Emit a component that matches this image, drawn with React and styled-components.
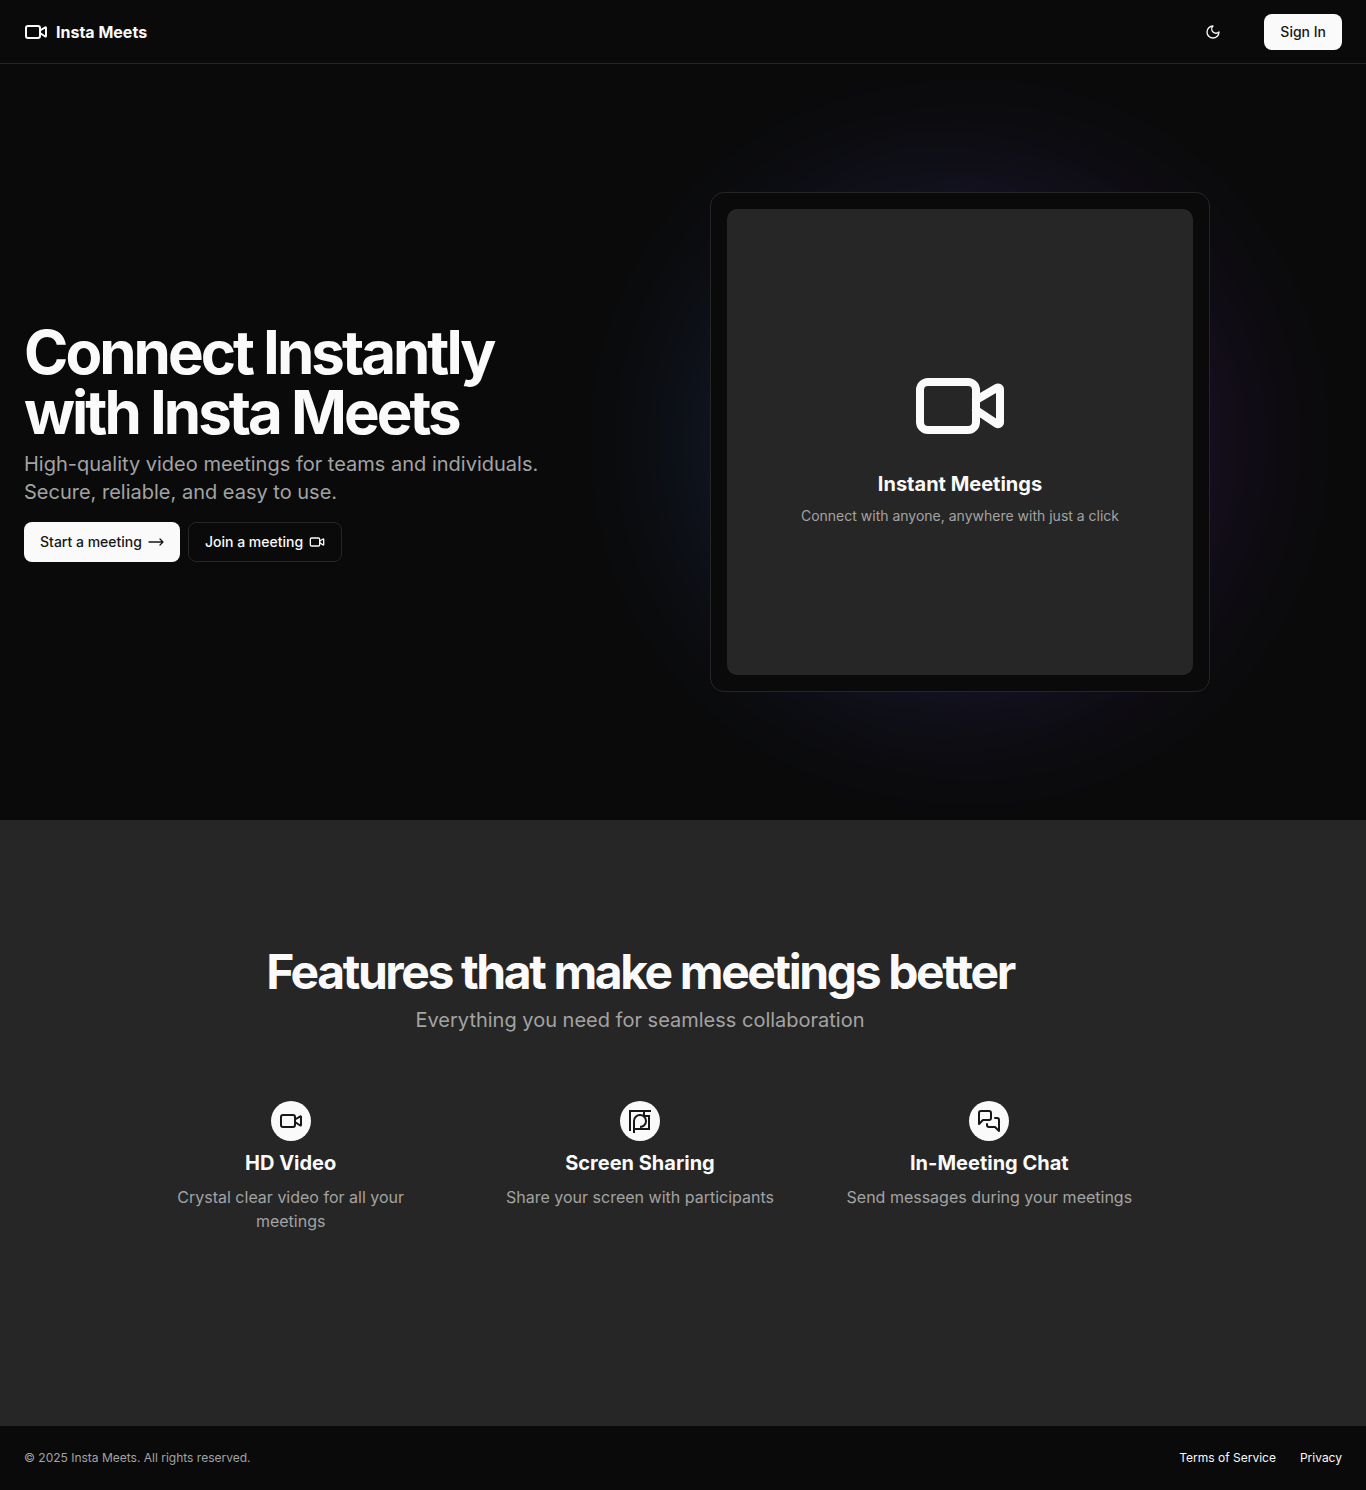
import React from "react";
import styled, { createGlobalStyle } from "styled-components";
import { Video } from "lucide-react";

const GlobalStyle = createGlobalStyle`
  *, *::before, *::after { box-sizing: border-box; }
  body {
    margin: 0;
    background: #0a0a0a;
    color: #fafafa;
    font-family: Inter, "Liberation Sans", sans-serif;
    font-size: 16px;
    line-height: 24px;
  }
  h1, h2, h3, p { margin: 0; }
  a { color: inherit; text-decoration: none; }
  svg { display: block; flex-shrink: 0; }
`;

const Header = styled.header`
  display: flex;
  align-items: center;
  justify-content: space-between;
  height: 64px;
  padding: 0 24px;
  border-bottom: 1px solid #262626;
`;

const Brand = styled.a`
  display: flex;
  align-items: center;
  gap: 8px;
  font-weight: 700;
`;

const HeaderActions = styled.div`
  display: flex;
  align-items: center;
  gap: 33px;
`;

const Button = styled.button`
  display: inline-flex;
  align-items: center;
  justify-content: center;
  gap: 6px;
  height: ${(p) => (p.$large ? "40px" : "36px")};
  padding: 0 16px;
  border: ${(p) => (p.$outline ? "1px solid #262626" : "0")};
  border-radius: 8px;
  background: ${(p) => (p.$outline ? "#0a0a0a" : "#fafafa")};
  color: ${(p) => (p.$outline ? "#fafafa" : "#171717")};
  font: 500 14px/20px Inter, "Liberation Sans", sans-serif;
  cursor: pointer;
`;

const IconButton = styled.button`
  display: grid;
  place-items: center;
  width: 36px;
  height: 36px;
  padding: 0;
  border: 0;
  border-radius: 8px;
  background: transparent;
  color: #fafafa;
  cursor: pointer;
`;

const Hero = styled.section`
  padding: 128px 0;
  overflow: hidden;
`;

const Container = styled.div`
  max-width: 1280px;
  padding: 0 24px;
`;

const HeroGrid = styled(Container)`
  display: grid;
  grid-template-columns: repeat(2, minmax(0, 1fr));
  gap: 48px;
  align-items: center;
  @media (max-width: 1023px) { grid-template-columns: minmax(0, 1fr); }
`;

const HeroCopy = styled.div`
  display: flex;
  flex-direction: column;
  gap: 16px;
`;

const HeroText = styled.div`
  display: flex;
  flex-direction: column;
  gap: 8px;
`;

const HeroTitle = styled.h1`
  font-size: 60px;
  line-height: 60px;
  font-weight: 700;
  letter-spacing: -0.05em;
`;

const Lead = styled.p`
  color: #a3a3a3;
  font-size: 20px;
  line-height: ${(p) => (p.$relaxed ? "32px" : "28px")};
`;

const ButtonRow = styled.div`
  display: flex;
  flex-wrap: wrap;
  gap: 8px;
`;

const Preview = styled.div`
  position: relative;
  width: 100%;
  max-width: 500px;
  aspect-ratio: 1;
  margin: 0 auto;
`;

const Glow = styled.div`
  position: absolute;
  inset: 0;
  border-radius: 50%;
  background: linear-gradient(to right, #3b82f6, #9333ea);
  opacity: 0.2;
  filter: blur(80px);
`;

const PreviewFrame = styled.div`
  position: relative;
  height: 100%;
  padding: 16px;
  border: 1px solid #262626;
  border-radius: 14px;
  background: #0a0a0a;
`;

const PreviewPanel = styled.div`
  display: flex;
  flex-direction: column;
  align-items: center;
  justify-content: center;
  gap: 16px;
  height: 100%;
  border-radius: 10px;
  background: #262626;
  text-align: center;
`;

const PreviewCaption = styled.div`
  display: flex;
  flex-direction: column;
  gap: 8px;
`;

const CardTitle = styled.h3`
  font-size: 20px;
  line-height: 28px;
  font-weight: 700;
`;

const Muted = styled.p`
  color: #a3a3a3;
  font-size: ${(p) => (p.$small ? "14px" : "16px")};
  line-height: ${(p) => (p.$small ? "20px" : "24px")};
`;

const Features = styled.section`
  padding: 128px 0;
  background: #262626;
`;

const FeaturesIntro = styled.div`
  display: flex;
  flex-direction: column;
  gap: 8px;
  text-align: center;
`;

const FeaturesTitle = styled.h2`
  font-size: 48px;
  line-height: 48px;
  font-weight: 700;
  letter-spacing: -0.05em;
`;

const FeatureGrid = styled.div`
  display: grid;
  grid-template-columns: repeat(3, minmax(0, 1fr));
  gap: 24px;
  max-width: 1024px;
  margin: 0 auto;
  padding: 48px 0;
  @media (max-width: 767px) { grid-template-columns: minmax(0, 1fr); }
`;

const Feature = styled.article`
  display: flex;
  flex-direction: column;
  align-items: center;
  gap: 8px;
  padding: 16px;
  border: 1px solid #262626;
  border-radius: 10px;
  text-align: center;
`;

const FeatureIcon = styled.div`
  padding: 8px;
  border-radius: 50%;
  background: #fafafa;
  color: #171717;
`;

const Footer = styled.footer`
  display: flex;
  align-items: center;
  justify-content: space-between;
  padding: 24px;
  font-size: 12px;
  line-height: 16px;
`;

const Copyright = styled.p`
  color: #a3a3a3;
`;

const FooterNav = styled.nav`
  display: flex;
  gap: 24px;
`;

function MoonIcon() {
  return (
    <svg width="16" height="16" viewBox="0 0 24 24" fill="none" stroke="currentColor" strokeWidth="2" strokeLinecap="round" strokeLinejoin="round" aria-hidden="true">
      <path d="M12 3a6 6 0 0 0 9 9 9 9 0 1 1-9-9Z" />
    </svg>
  );
}

function ArrowIcon() {
  return (
    <svg width="16" height="16" viewBox="0 0 16 16" fill="none" stroke="currentColor" strokeWidth="1.3" strokeLinecap="round" strokeLinejoin="round" aria-hidden="true">
      <path d="M1 8h14M12 5l3 3-3 3" />
    </svg>
  );
}

function ScreenShareIcon() {
  return (
    <svg width="24" height="24" viewBox="0 0 24 24" fill="none" stroke="currentColor" strokeWidth="2" aria-hidden="true">
      <path d="M2 22V2h21M6 24V12a6 6 0 1 1 6 6M16 2v5h5v13H6" />
    </svg>
  );
}

function ChatIcon() {
  return (
    <svg width="24" height="24" viewBox="0 0 24 24" fill="none" stroke="currentColor" strokeWidth="2" strokeLinecap="round" strokeLinejoin="round" aria-hidden="true">
      <path d="M14 9a2 2 0 0 1-2 2H6l-4 4V4a2 2 0 0 1 2-2h8a2 2 0 0 1 2 2z" />
      <path d="M18 9h2a2 2 0 0 1 2 2v11l-4-4h-6a2 2 0 0 1-2-2v-1" />
    </svg>
  );
}

const features = [
  { title: "HD Video", text: "Crystal clear video for all your meetings", icon: <Video size={24} /> },
  { title: "Screen Sharing", text: "Share your screen with participants", icon: <ScreenShareIcon /> },
  { title: "In-Meeting Chat", text: "Send messages during your meetings", icon: <ChatIcon /> },
];

export default function App() {
  return (
    <>
      <GlobalStyle />
      <Header>
        <Brand href="#"><Video size={24} />Insta Meets</Brand>
        <HeaderActions>
          <IconButton type="button" aria-label="Toggle theme"><MoonIcon /></IconButton>
          <Button type="button">Sign In</Button>
        </HeaderActions>
      </Header>
      <main>
        <Hero>
          <HeroGrid>
            <HeroCopy>
              <HeroText>
                <HeroTitle>Connect Instantly with Insta Meets</HeroTitle>
                <Lead>High-quality video meetings for teams and individuals. Secure, reliable, and easy to use.</Lead>
              </HeroText>
              <ButtonRow>
                <Button type="button" $large>Start a meeting<ArrowIcon /></Button>
                <Button type="button" $large $outline>Join a meeting<Video size={16} /></Button>
              </ButtonRow>
            </HeroCopy>
            <Preview>
              <Glow />
              <PreviewFrame>
                <PreviewPanel>
                  <Video size={96} />
                  <PreviewCaption>
                    <CardTitle>Instant Meetings</CardTitle>
                    <Muted $small>Connect with anyone, anywhere with just a click</Muted>
                  </PreviewCaption>
                </PreviewPanel>
              </PreviewFrame>
            </Preview>
          </HeroGrid>
        </Hero>
        <Features>
          <Container>
            <FeaturesIntro>
              <FeaturesTitle>Features that make meetings better</FeaturesTitle>
              <Lead $relaxed>Everything you need for seamless collaboration</Lead>
            </FeaturesIntro>
            <FeatureGrid>
              {features.map((f) => (
                <Feature key={f.title}>
                  <FeatureIcon>{f.icon}</FeatureIcon>
                  <CardTitle>{f.title}</CardTitle>
                  <Muted>{f.text}</Muted>
                </Feature>
              ))}
            </FeatureGrid>
          </Container>
        </Features>
      </main>
      <Footer>
        <Copyright>© 2025 Insta Meets. All rights reserved.</Copyright>
        <FooterNav>
          <a href="#terms">Terms of Service</a>
          <a href="#privacy">Privacy</a>
        </FooterNav>
      </Footer>
    </>
  );
}
